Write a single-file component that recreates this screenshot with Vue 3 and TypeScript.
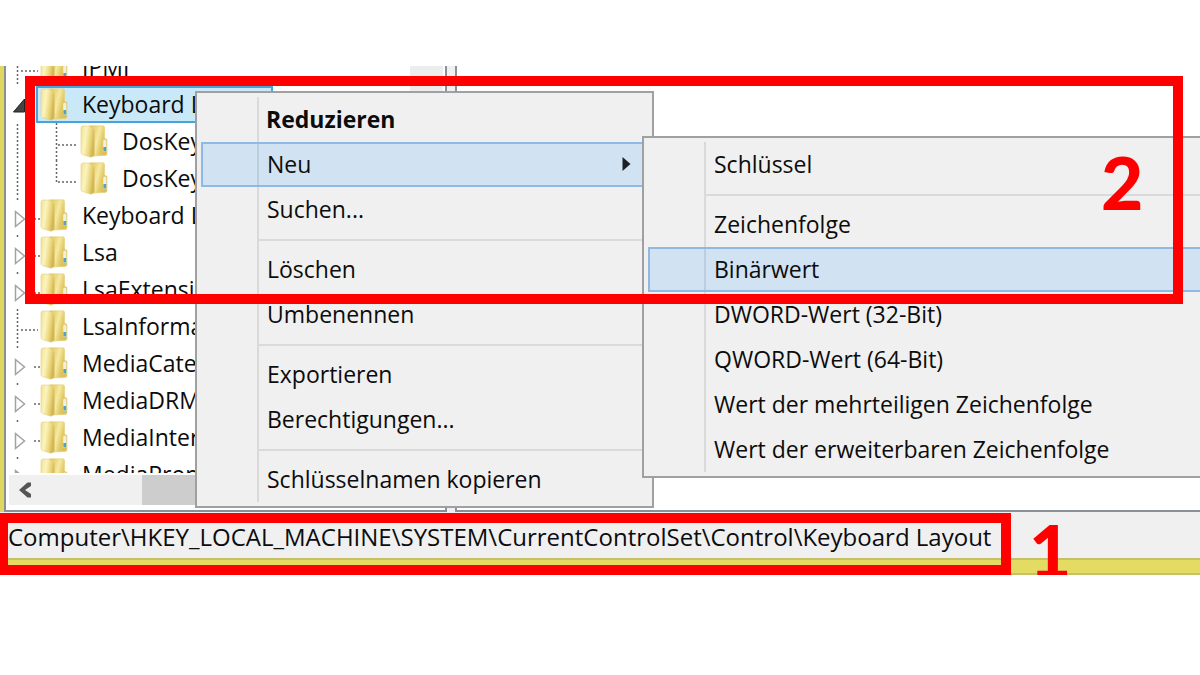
<script setup lang="ts">
interface TreeRow {
  label: string
  kind: 'leaf' | 'open' | 'closed' | 'child'
  last?: boolean
}

interface MenuEntry {
  label?: string
  bold?: boolean
  active?: boolean
  submenu?: boolean
}

const rows: TreeRow[] = [
  { label: 'IPMI', kind: 'leaf' },
  { label: 'Keyboard Layout', kind: 'open' },
  { label: 'DosKeybCodes', kind: 'child' },
  { label: 'DosKeybIDs', kind: 'child', last: true },
  { label: 'Keyboard Layouts', kind: 'closed' },
  { label: 'Lsa', kind: 'closed' },
  { label: 'LsaExtensionConfig', kind: 'closed' },
  { label: 'LsaInformation', kind: 'leaf' },
  { label: 'MediaCategories', kind: 'closed' },
  { label: 'MediaDRM', kind: 'closed' },
  { label: 'MediaInterfaces', kind: 'closed' },
  { label: 'MediaProperties', kind: 'closed' },
]

const contextMenu: MenuEntry[] = [
  { label: 'Reduzieren', bold: true },
  { label: 'Neu', active: true, submenu: true },
  { label: 'Suchen...' },
  {},
  { label: 'Löschen' },
  { label: 'Umbenennen' },
  {},
  { label: 'Exportieren' },
  { label: 'Berechtigungen...' },
  {},
  { label: 'Schlüsselnamen kopieren' },
]

const newMenu: MenuEntry[] = [
  { label: 'Schlüssel' },
  {},
  { label: 'Zeichenfolge' },
  { label: 'Binärwert', active: true },
  { label: 'DWORD-Wert (32-Bit)' },
  { label: 'QWORD-Wert (64-Bit)' },
  { label: 'Wert der mehrteiligen Zeichenfolge' },
  { label: 'Wert der erweiterbaren Zeichenfolge' },
]

const path = 'Computer\\HKEY_LOCAL_MACHINE\\SYSTEM\\CurrentControlSet\\Control\\Keyboard Layout'
</script>

<template>
  <main class="window">
    <svg class="defs" aria-hidden="true">
      <defs>
        <linearGradient id="fold-back" x1="0" x2="1" y1="0" y2="0.4">
          <stop offset="0" stop-color="#dcc363" />
          <stop offset="0.35" stop-color="#ecd87e" />
          <stop offset="0.55" stop-color="#f5e9a2" />
          <stop offset="0.8" stop-color="#e3ca66" />
          <stop offset="1" stop-color="#dcc058" />
        </linearGradient>
        <linearGradient id="fold-front" x1="0" x2="1" y1="0" y2="0.3">
          <stop offset="0" stop-color="#f1e193" />
          <stop offset="0.4" stop-color="#fbf4bd" />
          <stop offset="0.75" stop-color="#ead67c" />
          <stop offset="1" stop-color="#d3b654" />
        </linearGradient>
      </defs>
    </svg>

    <div class="panes">
      <section class="tree-pane">
        <div class="tree-body">
          <ul class="tree">
            <li v-for="row in rows" :key="row.label" class="row">
              <svg class="guide" width="30" height="37" viewBox="0 0 30 37" aria-hidden="true">
                <path v-if="row.kind === 'leaf' || row.kind === 'child'" class="dots" d="M11.500 1V37" />
                <path v-if="row.kind === 'leaf'" class="dots" d="M15 22H32" />
                <template v-if="row.kind === 'closed'">
                  <path class="dots" d="M11.500 1V3M28 22H34" />
                  <path class="arrow" d="M9.500 14.500V29.500L18.500 22Z" />
                </template>
                <path v-if="row.kind === 'open'" class="arrow-open" d="M18.500 13V26H7.500Z" />
              </svg>
              <svg v-if="row.kind === 'child'" class="guide" width="40" height="37" viewBox="0 0 40 37" aria-hidden="true">
                <path class="dots" :d="row.last ? 'M20.500 0V22' : 'M20.500 0V37'" />
                <path class="dots" d="M22 22H42" />
              </svg>
              <button type="button" class="node" :class="{ selected: row.kind === 'open' }">
                <svg class="folder" width="28" height="33" viewBox="0 0 28 33" aria-hidden="true">
                  <path d="M9 2Q9 0.800 10 0.800L23 0.800Q24.500 0.800 24.500 2.500V13L27 14.500V28.500Q27 30.500 25 30.500L12 31Z" fill="url(#fold-back)" stroke="#e4cf78" stroke-width="0.600" />
                  <path d="M1 3Q1 1 3 1L10 1.200L13.500 4Q14.500 5 14.500 7V30.500L11 32.300L2.500 29.500Q1 29 1 27.500Z" fill="url(#fold-front)" stroke="#e4cf78" stroke-width="0.600" />
                  <path d="M23.200 16Q23.200 14.500 24.800 14.500Q26.400 14.500 26.400 16V27H23.200Z" fill="#eef0e2" />
                  <path d="M23.400 22H26.200V26.500H23.400Z" fill="#4fa3c8" />
                </svg>
                <span>{{ row.label }}</span>
              </button>
            </li>
          </ul>
          <div class="vscroll"></div>
        </div>
        <div class="hscroll">
          <button type="button" class="scroll-left" aria-label="Nach links">
            <svg width="14" height="16" viewBox="0 0 14 16" aria-hidden="true">
              <path d="M13 0.500V4L7 8L13 12V15.500H9.500L1 8L9.500 0.500Z" fill="#555" />
            </svg>
          </button>
          <div class="thumb"></div>
        </div>
      </section>
      <section class="value-pane"></section>
    </div>

    <footer class="status">{{ path }}</footer>

    <div class="menu menu-context" role="menu">
      <template v-for="(entry, i) in contextMenu" :key="i">
        <button v-if="entry.label" type="button" role="menuitem" class="item" :class="{ bold: entry.bold, active: entry.active }">
          {{ entry.label }}
          <svg v-if="entry.submenu" width="9" height="14" viewBox="0 0 9 14" aria-hidden="true">
            <path d="M0.500 0L8.500 7L0.500 14Z" fill="#1c2024" />
          </svg>
        </button>
        <div v-else class="separator" role="separator"></div>
      </template>
    </div>

    <div class="menu menu-new" role="menu">
      <template v-for="(entry, i) in newMenu" :key="i">
        <button v-if="entry.label" type="button" role="menuitem" class="item" :class="{ active: entry.active }">
          {{ entry.label }}
        </button>
        <div v-else class="separator" role="separator"></div>
      </template>
    </div>

    <div class="mark mark-menu"></div>
    <div class="mark mark-path"></div>
    <span class="digit digit-two">2</span>
    <span class="digit digit-one">1</span>
  </main>
</template>

<style>
body {
  margin: 0;
  background: #fff;
}
</style>

<style scoped>
.window {
  position: relative;
  box-sizing: border-box;
  margin-top: 66px;
  overflow-x: clip;
  background: #f0f0f0;
  font: 23px/36px "Open Sans", "Noto Sans", sans-serif;
  color: #0c0c0c;
}

.window * {
  box-sizing: border-box;
}

button {
  margin: 0;
  padding: 0;
  border: 0;
  background: none;
  font: inherit;
  color: inherit;
  text-align: left;
  white-space: nowrap;
}

.defs {
  position: absolute;
  width: 0;
  height: 0;
}

.panes {
  display: flex;
  gap: 8px;
  height: 446px;
  border-left: 4px solid #e0d75f;
}

.tree-pane {
  display: flex;
  flex-direction: column;
  flex: none;
  width: 443px;
  border: solid #8b8f97;
  border-width: 0 2px 2px;
  background: #fff;
}

.value-pane {
  flex: 1;
  border: solid #8b8f97;
  border-width: 0 0 2px 2px;
  background: #fff;
}

.tree-body {
  display: flex;
  justify-content: space-between;
  height: 407px;
  overflow: hidden;
}

.tree {
  flex: 1;
  margin: -17px 0 0;
  padding: 0;
  list-style: none;
}

.row {
  display: flex;
  height: 37px;
}

.guide {
  flex: none;
  overflow: visible;
}

.dots {
  fill: none;
  stroke: #666;
  stroke-width: 1.5;
  stroke-dasharray: 2 2;
}

.arrow {
  fill: #fff;
  stroke: #a2a2a2;
  stroke-width: 1.5;
}

.arrow-open {
  fill: #444;
  stroke: #222;
  stroke-width: 1;
}

.node {
  display: flex;
  align-items: center;
  gap: 14px;
  height: 37px;
  padding: 0 4px;
}

.node span {
  padding-bottom: 1px;
}

.selected {
  width: 237px;
  padding: 0 2px;
  border: 2px solid #45a3dd;
  background: #c9e9f8;
}

.folder {
  flex: none;
}

.vscroll {
  width: 33px;
  margin-right: 2px;
  background: #ededed;
}

.hscroll {
  display: flex;
  height: 30px;
  margin: 2px 3px 0;
  background: #f0f0f0;
}

.scroll-left {
  display: flex;
  align-items: center;
  width: 133px;
  padding-left: 9px;
}

.thumb {
  width: 150px;
  background: #cdcdcd;
}

.status {
  height: 63px;
  padding-left: 8px;
  background: linear-gradient(#c6c067 2px, #e4db62 2px 15px, #c6c067 15px) bottom / 100% 17px no-repeat;
  font-size: 24px;
  line-height: 50px;
  white-space: nowrap;
}

.menu {
  position: absolute;
  padding: 4px;
  border: 2px solid #a0a0a0;
  background: linear-gradient(#dadada, #dadada) 60px 4px / 2px calc(100% - 8px) no-repeat #f0f0f0;
}

.menu-context {
  top: 25px;
  left: 195px;
  width: 459px;
}

.menu-new {
  top: 70px;
  left: 642px;
  right: -20px;
}

.item {
  display: flex;
  align-items: center;
  justify-content: space-between;
  width: 100%;
  height: 45px;
  padding: 0 17px 2px 66px;
}

.active {
  background: linear-gradient(#bccddf, #bccddf) 56px 0 / 2px 100% no-repeat #d1e2f2;
  box-shadow: inset 0 0 0 2px #8fb8e2;
}

.bold {
  padding-left: 65px;
  font-weight: 700;
}

.separator {
  height: 15px;
  margin-left: 56px;
  background: linear-gradient(#dadada, #dadada) 0 7px / 100% 2px no-repeat;
}

.mark {
  position: absolute;
  border: 10px solid #f00;
  pointer-events: none;
}

.mark-menu {
  top: 10px;
  left: 25px;
  right: 17px;
  height: 228px;
}

.mark-path {
  top: 447px;
  left: -2px;
  width: 1013px;
  height: 62px;
}

.digit {
  position: absolute;
  font: 900 73px/73px Lato, sans-serif;
  color: #f00;
}

.digit-two {
  top: 80px;
  left: 1101px;
}

.digit-one {
  top: 448px;
  left: 1029px;
}
</style>
